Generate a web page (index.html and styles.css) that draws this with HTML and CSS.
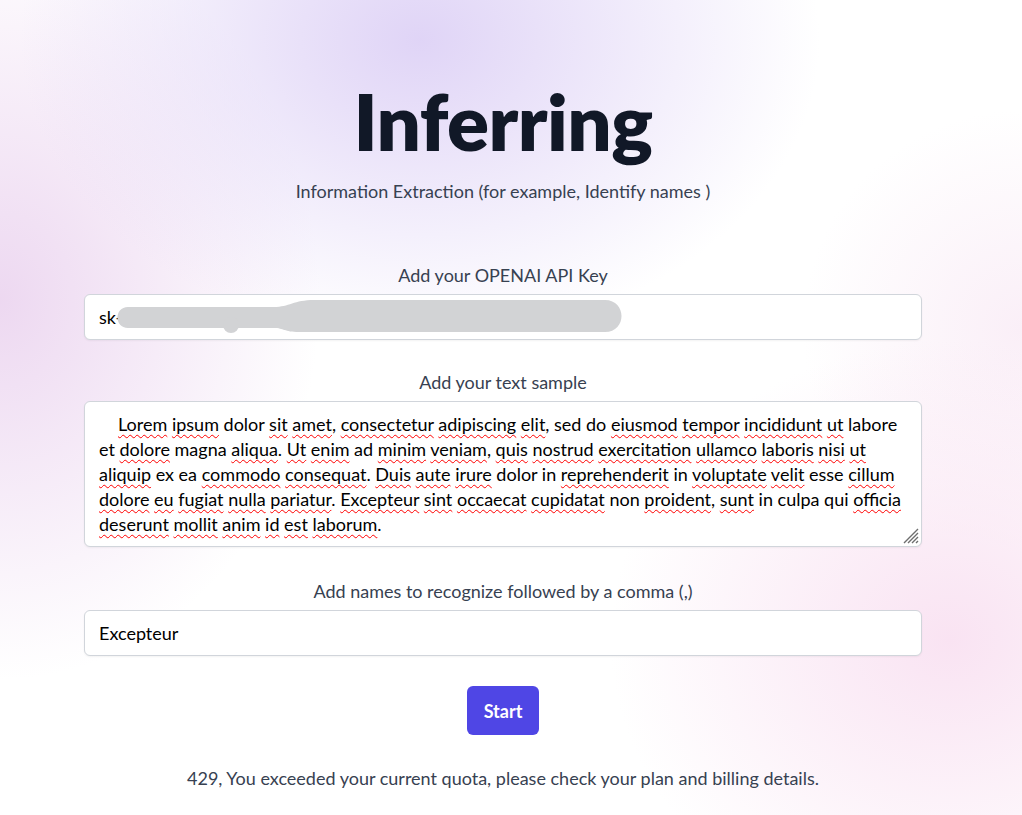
FILE: index.html
```html
<!DOCTYPE html>
<html lang="en">
<head>
<meta charset="utf-8">
<title>Inferring</title>
<link rel="stylesheet" href="styles.css">
</head>
<body>
<div class="page">
  <main class="wrap">
    <h1 class="title">Inferring</h1>
    <p class="subtitle">Information Extraction (for example, Identify names )</p>

    <form class="form">
      <label class="label">Add your OPENAI API Key</label>
      <div class="field">
        <div class="input">sk-</div>
        <svg class="blur" width="838" height="46" viewBox="0 0 838 46" aria-hidden="true">
          <path d="M44 13 L190 13 C205 13 210 6 230 6 L521 6 C543 6 543 38 521 38 L215 38 C200 38 200 34 190 34 L44 34 C30 34 30 13 44 13 Z" fill="#d2d3d5"/>
          <circle cx="147" cy="31" r="8" fill="#d2d3d5"/>
        </svg>
      </div>

      <label class="label">Add your text sample</label>
      <div class="textarea" role="textbox">
        <span class="indent"></span><span class="sp">Lorem</span> <span class="sp">ipsum</span> dolor <span class="sp">sit</span> <span class="sp">amet</span>, <span class="sp">consectetur</span> <span class="sp">adipiscing</span> <span class="sp">elit</span>, sed do <span class="sp">eiusmod</span> <span class="sp">tempor</span> <span class="sp">incididunt</span> <span class="sp">ut</span> labore<br>
        et <span class="sp">dolore</span> magna <span class="sp">aliqua</span>. <span class="sp">Ut</span> <span class="sp">enim</span> ad <span class="sp">minim</span> <span class="sp">veniam</span>, <span class="sp">quis</span> <span class="sp">nostrud</span> <span class="sp">exercitation</span> <span class="sp">ullamco</span> <span class="sp">laboris</span> <span class="sp">nisi</span> <span class="sp">ut</span><br>
        <span class="sp">aliquip</span> ex ea <span class="sp">commodo</span> <span class="sp">consequat</span>. <span class="sp">Duis</span> <span class="sp">aute</span> <span class="sp">irure</span> dolor in <span class="sp">reprehenderit</span> in <span class="sp">voluptate</span> <span class="sp">velit</span> esse <span class="sp">cillum</span><br>
        <span class="sp">dolore</span> <span class="sp">eu</span> <span class="sp">fugiat</span> <span class="sp">nulla</span> <span class="sp">pariatur</span>. <span class="sp">Excepteur</span> <span class="sp">sint</span> <span class="sp">occaecat</span> <span class="sp">cupidatat</span> non <span class="sp">proident</span>, <span class="sp">sunt</span> in culpa qui <span class="sp">officia</span><br>
        <span class="sp">deserunt</span> <span class="sp">mollit</span> <span class="sp">anim</span> <span class="sp">id</span> <span class="sp">est</span> <span class="sp">laborum</span>.
        <svg class="grip" width="16" height="16" viewBox="0 0 16 16" aria-hidden="true">
          <path d="M15 1 L1 15 M15 5 L5 15 M15 9 L9 15 M15 13 L13 15" stroke="#6e6e6e" stroke-width="1.4" fill="none"/>
        </svg>
      </div>

      <label class="label">Add names to recognize followed by a comma (,)</label>
      <div class="field">
        <div class="input">Excepteur</div>
      </div>

      <div class="actions">
        <button type="button" class="btn">Start</button>
      </div>
    </form>

    <p class="message">429, You exceeded your current quota, please check your plan and billing details.</p>
  </main>
</div>
</body>
</html>
```

FILE: styles.css
```css
* { box-sizing: border-box; }
html, body { margin: 0; padding: 0; }
body {
  font-family: "Lato", "Noto Sans", sans-serif;
  color: #111827;
  min-height: 815px;
  background-color: #ffffff;
  background-image:
    radial-gradient(ellipse 400px 300px at 420px 40px, rgba(222, 210, 246, 0.95), rgba(222, 210, 246, 0) 100%),
    radial-gradient(ellipse 320px 380px at 0px 300px, rgba(236, 214, 240, 0.95), rgba(236, 214, 240, 0) 100%),
    radial-gradient(ellipse 340px 300px at 950px 640px, rgba(248, 222, 240, 0.85), rgba(248, 222, 240, 0) 100%),
    radial-gradient(ellipse 220px 220px at 1022px 330px, rgba(248, 232, 244, 0.7), rgba(248, 232, 244, 0) 100%);
  background-repeat: no-repeat;
}
.page {
  width: 1006px;
  padding-top: 82px;
}
.wrap {
  width: 838px;
  margin: 0 auto;
  display: flex;
  flex-direction: column;
  align-items: stretch;
}
.title {
  margin: 0;
  text-align: center;
  font-size: 78px;
  line-height: 78px;
  font-weight: 800;
  color: #111827;
  letter-spacing: -0.5px;
}
.subtitle {
  margin: 17px 0 0;
  text-align: center;
  font-size: 18px;
  line-height: 28px;
  color: #374151;
}
.form {
  display: flex;
  flex-direction: column;
  margin-top: 56px;
}
.label {
  display: block;
  text-align: center;
  font-size: 18px;
  line-height: 28px;
  color: #374151;
  margin-bottom: 5px;
}
.field { position: relative; margin-bottom: 28px; }
.input {
  height: 46px;
  border: 1px solid #d1d5db;
  border-radius: 6px;
  background: #fff;
  box-shadow: 0 1px 2px rgba(0,0,0,0.05);
  padding: 8px 14px;
  font-size: 18px;
  line-height: 28px;
  color: #000;
}
.blur {
  position: absolute;
  left: 0;
  top: 0;
}
.textarea {
  position: relative;
  height: 146px;
  border: 1px solid #d1d5db;
  border-radius: 6px;
  background: #fff;
  box-shadow: 0 1px 2px rgba(0,0,0,0.05);
  padding: 10px 14px;
  font-size: 18px;
  line-height: 25px;
  color: #000;
  white-space: nowrap;
  margin-bottom: 30px;
}
.indent { display: inline-block; width: 19px; }
.sp {
  text-decoration: underline wavy #ff0000;
  text-decoration-thickness: 1.4px;
  text-underline-offset: 3px;
  text-decoration-skip-ink: none;
}
.grip { position: absolute; right: 2px; bottom: 2px; }
.actions {
  display: flex;
  justify-content: center;
  margin-top: 2px;
}
.btn {
  font-family: inherit;
  font-size: 18px;
  font-weight: 700;
  color: #fff;
  background: #4f46e5;
  border: 0;
  border-radius: 6px;
  height: 49px;
  padding: 0 17px;
  cursor: pointer;
}
.message {
  margin: 29px 0 0;
  text-align: center;
  font-size: 18px;
  line-height: 28px;
  color: #374151;
}
```
